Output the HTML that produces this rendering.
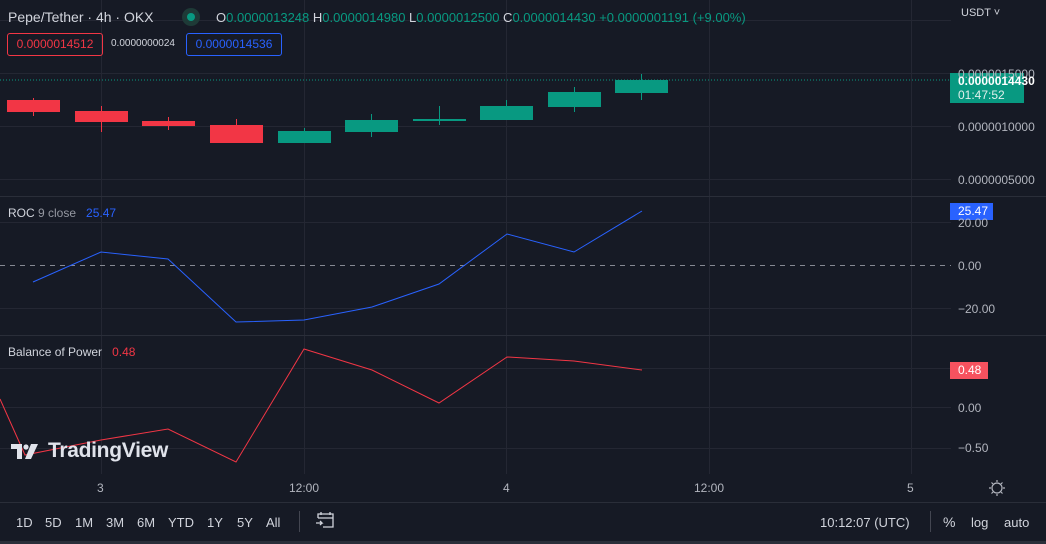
<!DOCTYPE html>
<html><head><meta charset="utf-8"><style>
body{margin:0;width:1046px;height:544px;background:#161a25;overflow:hidden;font-family:"Liberation Sans",sans-serif;position:relative}
.t{position:absolute;white-space:nowrap}
.ax{color:#b2b5be;font-size:12px}
.b{position:absolute;top:515px;font-size:13px;color:#d1d4dc}
</style></head><body>
<svg width="1046" height="544" style="position:absolute;left:0;top:0">
<g stroke="#242733" stroke-width="1">
<line x1="101.5" y1="0" x2="101.5" y2="474"/><line x1="304.5" y1="0" x2="304.5" y2="474"/><line x1="506.5" y1="0" x2="506.5" y2="474"/><line x1="709.5" y1="0" x2="709.5" y2="474"/><line x1="911.5" y1="0" x2="911.5" y2="474"/>
<line x1="0" y1="20.5" x2="951" y2="20.5"/><line x1="0" y1="73.5" x2="951" y2="73.5"/><line x1="0" y1="126.5" x2="951" y2="126.5"/><line x1="0" y1="179.5" x2="951" y2="179.5"/>
<line x1="0" y1="222.5" x2="951" y2="222.5"/><line x1="0" y1="308.5" x2="951" y2="308.5"/>
<line x1="0" y1="368.5" x2="951" y2="368.5"/><line x1="0" y1="407.5" x2="951" y2="407.5"/><line x1="0" y1="448.5" x2="951" y2="448.5"/>
</g>
<g stroke="#2a2e39"><line x1="0" y1="196.5" x2="1046" y2="196.5"/><line x1="0" y1="335.5" x2="1046" y2="335.5"/><line x1="0" y1="502.5" x2="1046" y2="502.5"/></g>
<line x1="0" y1="265.5" x2="951" y2="265.5" stroke="#868993" stroke-dasharray="5,5"/>
<line x1="0" y1="80" x2="951" y2="80" stroke="#089981" stroke-dasharray="1,2"/>
<g fill="#f23645" stroke="#f23645">
<line x1="33.5" y1="98" x2="33.5" y2="116"/><rect x="7" y="100" width="53" height="12" stroke="none"/>
<line x1="101.5" y1="106" x2="101.5" y2="132"/><rect x="75" y="111" width="53" height="11" stroke="none"/>
<line x1="168.5" y1="117" x2="168.5" y2="130"/><rect x="142" y="121" width="53" height="5" stroke="none"/>
<line x1="236.5" y1="119" x2="236.5" y2="125"/><rect x="210" y="125" width="53" height="18" stroke="none"/>
</g>
<g fill="#089981" stroke="#089981">
<line x1="304.5" y1="128" x2="304.5" y2="131"/><rect x="278" y="131" width="53" height="12" stroke="none"/>
<line x1="371.5" y1="114" x2="371.5" y2="137"/><rect x="345" y="120" width="53" height="12" stroke="none"/>
<line x1="439.5" y1="106" x2="439.5" y2="125"/><rect x="413" y="119" width="53" height="2" stroke="none"/>
<line x1="506.5" y1="100" x2="506.5" y2="106"/><rect x="480" y="106" width="53" height="14" stroke="none"/>
<line x1="574.5" y1="87" x2="574.5" y2="112"/><rect x="548" y="92" width="53" height="15" stroke="none"/>
<line x1="641.5" y1="74" x2="641.5" y2="100"/><rect x="615" y="80" width="53" height="13" stroke="none"/>
</g>
<polyline fill="none" stroke="#2962ff" stroke-width="1" points="33,282 101,252 168,259 236,322 304,320 372,307 439,284 507,234 574,252 642,211"/>
<polyline fill="none" stroke="#f23645" stroke-width="1" points="0,399 25,455 101,440 168,429 236,462 304,349 372,370 439,403 507,357 574,361 642,370"/>
<rect x="950" y="73" width="74" height="30" fill="#089981"/>
<rect x="950" y="203" width="43" height="17" fill="#2962ff"/>
<rect x="950" y="362" width="38" height="17" fill="#f7525f"/>
<line x1="299.5" y1="511" x2="299.5" y2="532" stroke="#434651"/>
<line x1="930.5" y1="511" x2="930.5" y2="532" stroke="#434651"/>
<rect x="0" y="541" width="1046" height="3" fill="#2a2e39"/>
<g fill="none" stroke="#b2b5be" stroke-width="1.2"><circle cx="997" cy="488" r="5"/>
<path d="M997 480v2M997 494v2M989 488h2M1003 488h2M991.5 482.5l1.5 1.5M1001 492l1.5 1.5M991.5 493.5l1.5-1.5M1001 484l1.5-1.5"/></g>
<g fill="none" stroke="#d1d4dc" stroke-width="1.3"><path d="M318 518v-4h15v13h-10M318 518h15M321 512v3M330 512v3M316 523h6l-2-2M322 523l-2 2"/></g>
<circle cx="191" cy="17" r="9" fill="#1e3a37"/><circle cx="191" cy="17" r="4" fill="#089981"/>
<g fill="#e0e3eb"><path d="M11 444h11v15h-5v-10h-6z"/><circle cx="26" cy="447" r="2.6"/><path d="M31 444h7l-7 15h-6z"/></g>
</svg>
<div class="t" style="left:8px;top:9px;font-size:14px;color:#d1d4dc">Pepe/Tether · 4h · OKX</div>
<div class="t" style="left:216px;top:10px;font-size:13px;color:#089981"><span style="color:#d1d4dc">O</span>0.0000013248 <span style="color:#d1d4dc">H</span>0.0000014980 <span style="color:#d1d4dc">L</span>0.0000012500 <span style="color:#d1d4dc">C</span>0.0000014430 +0.0000001191 (+9.00%)</div>
<div class="t" style="left:7px;top:33px;width:94px;height:21px;border:1px solid #f23645;border-radius:3px;color:#f23645;font-size:12px;line-height:21px;text-align:center">0.0000014512</div>
<div class="t" style="left:111px;top:38px;font-size:10px;color:#d1d4dc">0.0000000024</div>
<div class="t" style="left:186px;top:33px;width:94px;height:21px;border:1px solid #2962ff;border-radius:3px;color:#2962ff;font-size:12px;line-height:21px;text-align:center">0.0000014536</div>
<div class="t" style="left:961px;top:7px;font-size:11px;color:#d1d4dc">USDT ˅</div>
<div class="t ax" style="left:958px;top:67px">0.0000015000</div>
<div class="t" style="left:958px;top:74px;font-size:12px;color:#fff;font-weight:bold">0.0000014430</div>
<div class="t" style="left:958px;top:88px;font-size:12px;color:#e0f0ec">01:47:52</div>
<div class="t ax" style="left:958px;top:120px">0.0000010000</div>
<div class="t ax" style="left:958px;top:173px">0.0000005000</div>
<div class="t" style="left:958px;top:204px;font-size:12px;color:#fff">25.47</div>
<div class="t ax" style="left:958px;top:216px">20.00</div>
<div class="t ax" style="left:958px;top:259px">0.00</div>
<div class="t ax" style="left:958px;top:302px">−20.00</div>
<div class="t" style="left:958px;top:363px;font-size:12px;color:#fff">0.48</div>
<div class="t ax" style="left:958px;top:401px">0.00</div>
<div class="t ax" style="left:958px;top:441px">−0.50</div>
<div class="t" style="left:8px;top:206px;font-size:12px;color:#d1d4dc">ROC <span style="color:#9598a1">9 close</span>&nbsp;&nbsp;&nbsp;<span style="color:#2962ff">25.47</span></div>
<div class="t" style="left:8px;top:345px;font-size:12px;color:#d1d4dc">Balance of Power&nbsp;&nbsp;&nbsp;<span style="color:#f23645">0.48</span></div>
<div class="t" style="left:48px;top:439px;font-size:21px;color:#e0e3eb;font-weight:bold;letter-spacing:-0.3px">TradingView</div>
<div class="t ax" style="left:97px;top:481px">3</div>
<div class="t ax" style="left:289px;top:481px">12:00</div>
<div class="t ax" style="left:503px;top:481px">4</div>
<div class="t ax" style="left:694px;top:481px">12:00</div>
<div class="t ax" style="left:907px;top:481px">5</div>
<div class="b" style="left:16px">1D</div><div class="b" style="left:45px">5D</div><div class="b" style="left:75px">1M</div><div class="b" style="left:106px">3M</div><div class="b" style="left:137px">6M</div><div class="b" style="left:168px">YTD</div><div class="b" style="left:207px">1Y</div><div class="b" style="left:237px">5Y</div><div class="b" style="left:266px">All</div>
<div class="b" style="left:820px">10:12:07 (UTC)</div>
<div class="t" style="left:943px;top:514px;font-size:14px;color:#d1d4dc">%</div>
<div class="b" style="left:971px">log</div>
<div class="b" style="left:1004px">auto</div>
</body></html>
